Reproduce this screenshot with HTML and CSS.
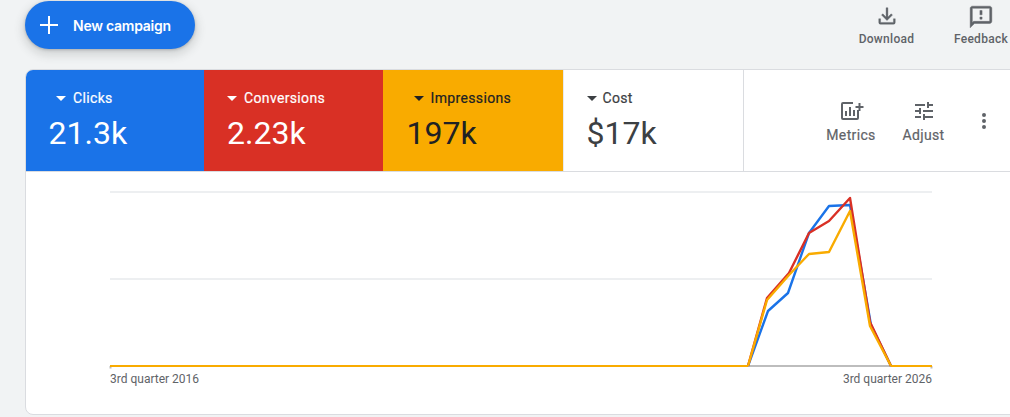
FILE: index.html
```html
<!DOCTYPE html>
<html lang="en">
<head>
<meta charset="utf-8">
<title>Overview</title>
<link rel="stylesheet" href="styles.css">
</head>
<body>
<header class="topbar">
  <button class="fab">
    <svg class="fab-icon" viewBox="0 0 24 24"><path d="M21 13h-8v8h-2v-8H3v-2h8V3h2v8h8z"/></svg>
    <span>New campaign</span>
  </button>
  <div class="top-actions">
    <div class="top-action download">
      <svg class="icon" viewBox="0 0 24 24"><path d="M19 15v4H5v-4H3v4a2 2 0 0 0 2 2h14a2 2 0 0 0 2-2v-4h-2zm-1-4-1.410-1.410L13 13.170V3h-2v10.170L7.410 9.590 6 11l6 6 6-6z"/></svg>
      <span>Download</span>
    </div>
    <div class="top-action feedback">
      <svg class="icon" viewBox="0 0 24 24"><path d="M20 2H4c-1.100 0-2 .9-2 2v18l4-4h14c1.100 0 2-.9 2-2V4c0-1.100-.9-2-2-2zm0 14H5.170L4 17.170V4h16v12zM11 12h2v2h-2zm0-6h2v4h-2z"/></svg>
      <span>Feedback</span>
    </div>
  </div>
</header>
<main class="card">
  <section class="scorecards">
    <div class="metric blue">
      <div class="metric-label label-clicks"><i class="caret"></i>Clicks</div>
      <div class="metric-value">21.3k</div>
    </div>
    <div class="metric red">
      <div class="metric-label label-conv"><i class="caret"></i>Conversions</div>
      <div class="metric-value">2.23k</div>
    </div>
    <div class="metric yellow">
      <div class="metric-label label-impr"><i class="caret"></i>Impressions</div>
      <div class="metric-value">197k</div>
    </div>
    <div class="metric plain">
      <div class="metric-label label-cost"><i class="caret"></i>Cost</div>
      <div class="metric-value">$17k</div>
    </div>
    <div class="tools">
      <div class="tool metrics">
        <svg class="icon-wide" viewBox="0 0 26 24"><path d="M7 12h2v5H7zM11 8h2v9h-2zm4 3h2v6h-2z"/><path d="M19 19H5V5h10V3H5a2 2 0 0 0-2 2v14a2 2 0 0 0 2 2h14a2 2 0 0 0 2-2v-8h-2v8z"/><path d="M22.500 4V7H25.500v2h-3v3h-2V9H17.500V7h3V4z"/></svg>
        <span>Metrics</span>
      </div>
      <div class="tool adjust">
        <svg class="icon" viewBox="0 0 24 24"><path d="M3 17v2h6v-2H3zM3 5v2h10V5H3zm10 16v-2h8v-2h-8v-2h-2v6h2zM7 9v2H3v2h4v2h2V9H7zm14 4v-2H11v2h10zm-6-4h2V7h4V5h-4V3h-2v6z"/></svg>
        <span>Adjust</span>
      </div>
      <svg class="more" viewBox="0 0 24 24"><path d="M12 8a2 2 0 1 0 0-4 2 2 0 0 0 0 4zm0 2a2 2 0 1 0 0 4 2 2 0 0 0 0-4zm0 6a2 2 0 1 0 0 4 2 2 0 0 0 0-4z"/></svg>
    </div>
  </section>
  <section class="chart">
    <svg class="plot" viewBox="0 0 824 176">
      <path class="grid" d="M0 1h822M0 88h822"/>
      <path class="axis" d="M0 175h822M.5 175v2.500M821.500 175v2.500"/>
      <polyline class="line l-blue" points="638,175 658,120 678,102 699,42 719,15 740,14 761,134 781,175"/>
      <polyline class="line l-red" points="638,175 657,107 679,82 699,42 719,30 740,7 760,131 781,175"/>
      <polyline class="line l-yellow" points="638,175 657,109 679,84 699,63 719,61 740,20 760,135 781,175"/>
      <path class="flat" d="M0 175H638M781 175H822"/>
    </svg>
    <div class="x-labels"><span>3rd quarter 2016</span><span>3rd quarter 2026</span></div>
  </section>
</main>
</body>
</html>
```
FILE: styles.css
```css
* { box-sizing: border-box; }
html, body { height: 100%; }
body {
  margin: 0;
  background: #f1f3f4;
  font-family: Roboto, "Liberation Sans", sans-serif;
  overflow: hidden;
  color: #3c4043;
}
.topbar {
  height: 69px;
  display: flex;
  justify-content: space-between;
  align-items: flex-start;
  padding: 1px 0 0 25px;
}
.fab {
  width: 170px;
  height: 48px;
  border: 0;
  border-radius: 24px;
  background: #1a73e8;
  color: #fff;
  display: flex;
  align-items: center;
  padding: 0 0 0 12px;
  gap: 12px;
  font: 600 14px Inter, Roboto, sans-serif;
  letter-spacing: -0.25px;
  box-shadow: 0 1px 3px rgba(60,64,67,.3), 0 4px 8px 3px rgba(60,64,67,.15);
}
.fab-icon { width: 24px; height: 24px; fill: #fff; flex: none; }
.top-actions { display: flex; margin-right: -10px; }
.top-action {
  display: flex;
  flex-direction: column;
  align-items: center;
  font: 500 12px Roboto, sans-serif;
  letter-spacing: .3px;
  color: #5f6368;
  padding-top: 3px;
}
.top-action .icon { fill: #5f6368; stroke: #5f6368; stroke-width: .4; }
.top-action.download { width: 95px; margin-right: 10px; padding-top: 4px; gap: 5px; }
.top-action.download .icon { width: 22px; height: 22px; }
.top-action.feedback { width: 76px; padding-right: 2px; gap: 2px; }
.top-action.feedback .icon { width: 26px; height: 26px; }
.card {
  margin: 0 -10px 0 25px;
  height: 346px;
  background: #fff;
  border: 1px solid #dadce0;
  border-radius: 8px;
  overflow: hidden;
  display: flex;
  flex-direction: column;
}
.scorecards {
  height: 102px;
  flex: none;
  display: flex;
  border-bottom: 1px solid #dadce0;
}
.metric {
  width: 179px;
  padding-top: 19px;
  flex: none;
}
.metric.blue { width: 178px; background: #1a73e8; color: #fff; padding-left: 23px; }
.metric.red { background: #d93025; color: #fff; padding-left: 23px; }
.metric.yellow { width: 180px; background: #f9ab00; color: #202124; padding-left: 23.500px; }
.metric.plain { width: 181px; padding-left: 22.500px; border-left: 1px solid #e8eaed; border-right: 1px solid #dadce0; }
.metric-label {
  display: flex;
  align-items: center;
  font: 400 14px Roboto, sans-serif;
  letter-spacing: .35px;
  line-height: 18px;
  -webkit-text-stroke: .2px currentColor;
}
.caret {
  width: 0;
  height: 0;
  border-left: 5px solid transparent;
  border-right: 5px solid transparent;
  border-top: 5px solid currentColor;
  margin-right: 7px;
}
.label-clicks { padding-left: 7px; }
.label-conv { padding-left: 0; }
.label-impr { padding-left: 7px; }
.label-cost { padding-left: 0; }
.label-cost .caret { margin-right: 6px; }
.metric-value {
  font: 400 32px/36px Roboto, sans-serif;
  margin-top: 8px;
}
.blue .metric-value { margin-left: -.5px; }
.plain .metric-value { color: #3c4043; }
.tools {
  flex: 1;
  display: flex;
  align-items: flex-start;
  padding: 29px 0 0 82px;
  color: #5f6368;
}
.tool {
  display: flex;
  flex-direction: column;
  align-items: center;
  font: 400 14px Roboto, sans-serif;
  letter-spacing: .35px;
  gap: 4px;
  -webkit-text-stroke: .2px currentColor;
}
.tool .icon { width: 24px; height: 24px; fill: #5f6368; }
.tool .icon-wide { width: 26px; height: 24px; fill: #5f6368; flex: none; }
.tool.metrics { width: 50px; }
.tool.adjust { width: 42px; margin-left: 26.500px; }
.more { width: 24px; height: 24px; fill: #5f6368; margin: 10px 0 0 27.500px; flex: none; }
.chart {
  flex: 1;
  padding: 19px 0 0 84px;
}
.plot { display: block; width: 824px; height: 176px; overflow: visible; }
.grid { stroke: #e8eaed; stroke-width: 1.500; fill: none; }
.axis { stroke: #bdbdbd; stroke-width: 2; fill: none; }
.line { fill: none; stroke-width: 2.400; stroke-linejoin: round; }
.flat { fill: none; stroke: #f9ab00; stroke-width: 2; }
.l-blue { stroke: #1a73e8; }
.l-red { stroke: #d93025; }
.l-yellow { stroke: #f9ab00; }
.x-labels {
  width: 822px;
  display: flex;
  justify-content: space-between;
  font: 400 12px/14px Roboto, sans-serif;
  color: #5f6368;
  margin-top: 5px;
}
```
